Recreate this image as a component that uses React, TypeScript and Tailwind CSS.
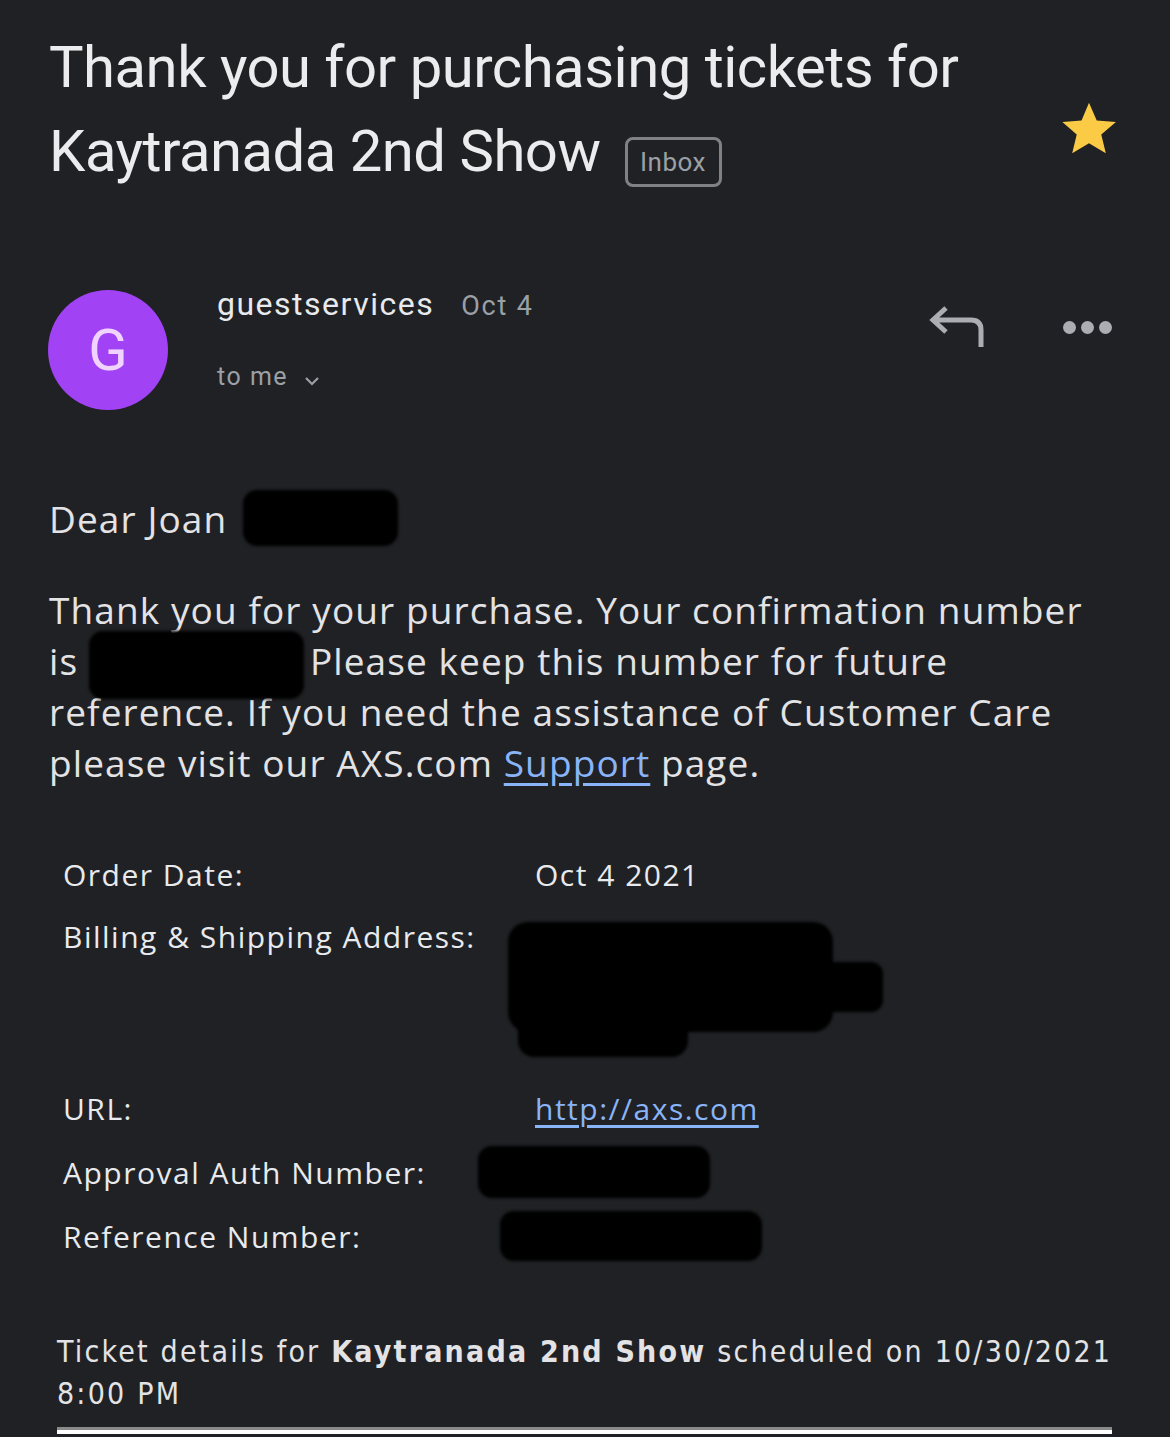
import React from "react";

const Blob = ({ className }: { className: string }) => (
  <span className={`inline-block bg-black rounded-[14px] blur-[1.5px] align-middle ${className}`} />
);

const Row = ({ label, children, className = "" }: { label: string; children?: React.ReactNode; className?: string }) => (
  <div className={`grid grid-cols-[472px_1fr] items-center ${className}`}>
    <div className="text-[30px] tracking-[1.5px] text-[#e8eaed]">{label}</div>
    <div className="text-[30px] tracking-[1.5px] text-[#e8eaed]">{children}</div>
  </div>
);

export default function App() {
  return (
    <div className="w-[1170px] h-[1437px] overflow-hidden bg-[#202124] text-[#e8eaed] font-['Roboto',sans-serif]">
      {/* Subject */}
      <div className="flex items-start pl-[49px] pr-[52px] pt-[25px]">
        <h1 className="flex-1 text-[58px] leading-[84px] tracking-[-0.5px] font-['Roboto',sans-serif] text-[#ececef]">
          Thank you for purchasing tickets for
          <br />
          Kaytranada 2nd Show
          <span className="inline-flex items-center justify-center ml-[24px] align-[0px] w-[97px] h-[50px] rounded-[8px] border-[3px] border-[#7f8185] text-[26px] leading-none text-[#9aa0a6] tracking-[0.5px]">
            Inbox
          </span>
        </h1>
        <svg width="66" height="64" viewBox="0 0 24 24" className="mt-[72px] -mr-[4px]">
          <path fill="#fbcb46" d="M12 2.2l2.9 6.6 7.2.6-5.5 4.7 1.7 7-6.3-3.8-6.3 3.8 1.7-7L2 9.4l7.2-.6z" />
        </svg>
      </div>

      {/* Sender */}
      <div className="flex items-start pl-[48px] pr-[58px] mt-[97px]">
        <div className="w-[120px] h-[120px] rounded-full bg-[#a142f4] flex items-center justify-center text-[58px] text-[#f0d4ff]">
          G
        </div>
        <div className="ml-[49px] -mt-[10px] flex-1">
          <div className="flex items-baseline">
            <span className="text-[32px] tracking-[1.5px] text-[#e8eaed]">guestservices</span>
            <span className="ml-[27px] text-[27px] tracking-[1.8px] text-[#9aa0a6]">Oct 4</span>
          </div>
          <div className="flex items-center mt-[30px] text-[25px] tracking-[1.5px] text-[#9aa0a6]">
            to me
            <svg width="24" height="24" viewBox="0 0 24 24" className="ml-[12px] mt-[8px]">
              <path d="M6 9l6 6 6-6" fill="none" stroke="#9aa0a6" strokeWidth="2.2" />
            </svg>
          </div>
        </div>
        <div className="flex items-center gap-[78px] mt-[16px]">
          <svg width="56" height="42" viewBox="0 0 56 42">
            <path d="M17 2 L4 14 L17 26 M4 14 H42 Q52 14 52 24 V41" fill="none" stroke="#aaadb2" strokeWidth="5" />
          </svg>
          <div className="flex gap-[5px]">
            <span className="w-[13px] h-[13px] rounded-full bg-[#aaadb2]" />
            <span className="w-[13px] h-[13px] rounded-full bg-[#aaadb2]" />
            <span className="w-[13px] h-[13px] rounded-full bg-[#aaadb2]" />
          </div>
        </div>
      </div>

      {/* Body */}
      <div className="pl-[49px] pr-[60px] mt-[80px] text-[37px] tracking-[1.1px] text-[#e3e3e6] font-['Open_Sans',sans-serif]">
        <p className="leading-[51px] flex items-center">
          Dear Joan
          <Blob className="ml-[16px] w-[155px] h-[56px]" />
        </p>
        <p className="leading-[51px] mt-[38px]">
          Thank you for your purchase. Your confirmation number is{" "}
          <span className="relative inline-block w-[215px] h-[20px] align-middle mr-[6px]">
            <span className="absolute left-0 right-0 -top-[24px] h-[68px] bg-black rounded-[14px] blur-[1.5px]" />
          </span>
          Please keep this number for future reference. If you need the assistance of Customer Care please visit our
          AXS.com <span className="text-[#8ab4f8] underline underline-offset-[6px]">Support</span> page.
        </p>
      </div>

      {/* Order table */}
      <div className="pl-[63px] pr-[60px] mt-[64px] font-['Open_Sans',sans-serif]">
        <Row label="Order Date:" className="h-[40px]">Oct 4 2021</Row>
        <Row label="Billing & Shipping Address:" className="h-[40px] mt-[22px]" />
        <div className="pl-[445px] -mt-[42px]">
          <div className="relative w-[375px] h-[150px]">
            <div className="absolute left-[0px] top-[10px] w-[325px] h-[110px] bg-black rounded-[20px] blur-[1.5px]" />
            <div className="absolute left-[300px] top-[50px] w-[75px] h-[50px] bg-black rounded-[12px] blur-[1.5px]" />
            <div className="absolute left-[10px] top-[90px] w-[170px] h-[55px] bg-black rounded-[16px] blur-[1.5px]" />
          </div>
        </div>
        <Row label="URL:" className="h-[40px] mt-[24px]">
          <span className="text-[#8ab4f8] underline underline-offset-[5px]">http://axs.com</span>
        </Row>
        <div className="flex items-center h-[50px] mt-[21px]">
          <span className="text-[30px] tracking-[1.5px] text-[#e8eaed] w-[415px]">Approval Auth Number:</span>
          <Blob className="w-[232px] h-[52px]" />
        </div>
        <div className="flex items-center h-[50px] mt-[14px]">
          <span className="text-[30px] tracking-[1.5px] text-[#e8eaed] w-[437px]">Reference Number:</span>
          <Blob className="w-[262px] h-[50px]" />
        </div>
      </div>

      {/* Ticket details */}
      <div className="pl-[57px] pr-[50px] mt-[70px] font-['DejaVu_Sans_Condensed','DejaVu_Sans',sans-serif]">
        <p className="text-[30px] leading-[42px] tracking-[2.2px] text-[#e3e3e6]">
          Ticket details for <b className="font-bold">Kaytranada 2nd Show</b> scheduled on 10/30/2021 8:00 PM
        </p>
        <div className="mt-[12px] mr-[8px] h-[7px] bg-white border-t-[3px] border-[#8a8a8a]" />
      </div>
    </div>
  );
}
